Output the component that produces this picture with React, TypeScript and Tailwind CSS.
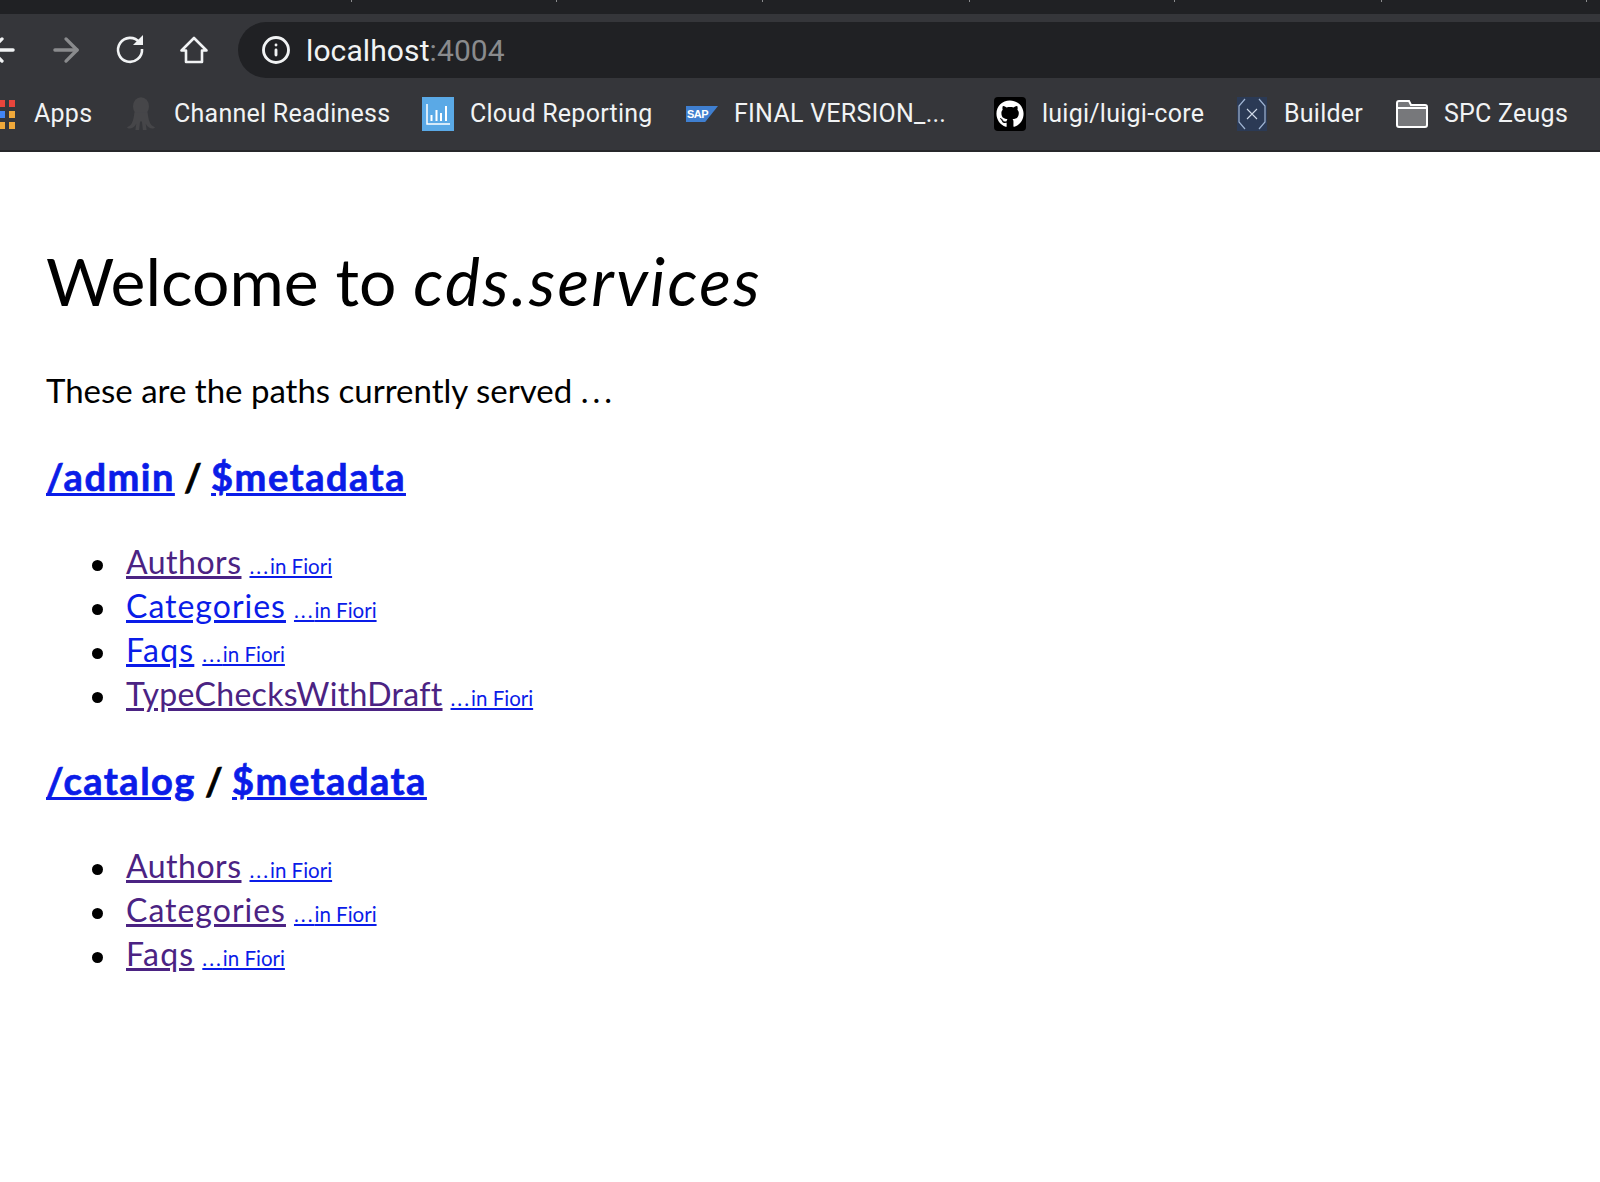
import React from "react";
import { ArrowLeft, ArrowRight, Info } from "lucide-react";
import { FaGithub } from "react-icons/fa";

function Apps() {
  const c = ["bg-[#e8453c]", "bg-[#e8453c]", "bg-[#4285f4]", "bg-[#f0a93a]", "bg-[#f0a93a]", "bg-[#f0a93a]"];
  return (
    <div className="grid grid-cols-2 gap-[4px] w-[16px] ml-[-1px] mr-[19px]">
      {c.map((x, i) => (
        <span key={i} className={`h-[7px] w-[6px] ${x}`} />
      ))}
    </div>
  );
}

function Octopus() {
  return (
    <svg viewBox="0 0 32 36" className="w-[30px] h-[36px]" fill="#464649">
      <ellipse cx="16" cy="10" rx="8.5" ry="10" />
      <path d="M9 16 C8 24 7 30 1 32 C3 35 9 33 11 28 L10 35 L14 35 L15 26 L17 26 L18 35 L22 35 L21 28 C23 33 29 35 31 32 C25 30 24 24 23 16 Z" />
    </svg>
  );
}

function Chart() {
  return (
    <svg viewBox="0 0 32 34" className="w-[32px] h-[34px]">
      <rect width="32" height="34" fill="#5aa9e6" />
      <path d="M5 7V27H28" stroke="#fff" strokeWidth="1.5" fill="none" />
      <path d="M9.5 18V24M14.5 13V24M19 16V24M24 9V24" stroke="#fff" strokeWidth="2" />
    </svg>
  );
}

function Sap() {
  return (
    <div
      className="w-[32px] h-[16px] bg-[#3f7fd0] flex items-center pl-[1px] text-[11px] leading-none font-bold text-white tracking-tighter"
      style={{ clipPath: "polygon(0 0, 100% 0, 60% 100%, 0 100%)", fontFamily: "'Liberation Sans', sans-serif" }}
    >
      SAP
    </div>
  );
}

function Github() {
  return (
    <div className="w-[32px] h-[34px] bg-black rounded-[4px] flex items-center justify-center text-white">
      <FaGithub size={28} />
    </div>
  );
}

function Hex() {
  return (
    <svg viewBox="0 0 32 34" className="w-[32px] h-[34px]">
      <rect x="1" width="30" height="34" fill="#2b3a55" />
      <path d="M9 2L3 9V25L9 32M23 2L29 9V25L23 32" stroke="#9fb4d2" strokeWidth="1.2" fill="none" />
      <path d="M11 12L21 22M21 12L11 22" stroke="#d0dae8" strokeWidth="1.1" />
    </svg>
  );
}

function Folder() {
  return (
    <svg viewBox="0 0 32 28" className="w-[32px] h-[28px]">
      <path d="M1 3a2 2 0 0 1 2-2h10l2 4h14a2 2 0 0 1 2 2v18a2 2 0 0 1-2 2H3a2 2 0 0 1-2-2Z" fill="#77787b" stroke="#fff" strokeWidth="2" />
      <path d="M1 8H31" stroke="#fff" strokeWidth="2" />
    </svg>
  );
}

function Reload() {
  return (
    <svg viewBox="0 2 30 30" className="w-[30px] h-[30px] ml-[30px]">
      <path d="M24.5 9.5A12 12 0 1 0 27 16" fill="none" stroke="#f1f3f4" strokeWidth="2.6" />
      <path d="M28 2V12H18Z" fill="#f1f3f4" />
    </svg>
  );
}

function HomeIcon() {
  return (
    <svg viewBox="0 0 32 32" className="w-[32px] h-[32px] ml-[33px]">
      <path d="M16 4L3.5 16.5H8V28H24V16.5H28.5Z" fill="none" stroke="#f1f3f4" strokeWidth="2.6" strokeLinejoin="round" />
    </svg>
  );
}

function Bookmark({ icon, label, w, ml }: { icon: React.ReactNode; label: string; w: string; ml: string }) {
  return (
    <div className={`flex items-center ${ml}`}>
      {icon}
      <span className={`${w} whitespace-nowrap`}>{label}</span>
    </div>
  );
}

const spacing: Record<string, string> = {
  Authors: "tracking-[0.5px]",
  Categories: "tracking-[1px]",
  Faqs: "tracking-[1.2px]",
  TypeChecksWithDraft: "tracking-[0.3px]",
};

function Entity({ name, visited }: { name: string; visited?: boolean }) {
  return (
    <li className="h-[44px] flex items-center">
      <span className="w-[11px] h-[11px] rounded-full bg-black mr-[23px] shrink-0" />
      <div className="leading-[44px] whitespace-nowrap">
        <a href="#" className={`underline text-[32px] ${spacing[name]} ${visited ? "text-[#4b2383]" : "text-[#0a1ce8]"}`}>
          {name}
        </a>
        <a href="#" className="underline text-[20.5px] ml-[8px] text-[#0a1ce8]">
          <span className="tracking-[2px]">...</span>in Fiori
        </a>
      </div>
    </li>
  );
}

function Service({ path, items }: { path: string; items: [string, boolean][] }) {
  return (
    <section>
      <h3 className="text-[38px] font-bold leading-[44px] text-black [-webkit-text-stroke:0.7px]">
        <a href="#" className="underline tracking-[1.5px] text-[#0a1ce8]">{path}</a>
        {" / "}
        <a href="#" className="underline tracking-[1.5px] text-[#0a1ce8]">$metadata</a>
      </h3>
      <ul className="list-none pl-[46px] pt-[45px] pb-[39px]">
        {items.map(([n, v]) => (
          <Entity key={n} name={n} visited={v} />
        ))}
      </ul>
    </section>
  );
}

export default function App() {
  const ticks = [351, 556, 762, 969, 1174, 1381, 1586];
  return (
    <div className="min-h-[1182px] bg-white overflow-hidden">
      <header className="bg-[#35363a] border-b-2 border-[#26272a] h-[152px]" style={{ fontFamily: "Roboto, sans-serif" }}>
        <div className="h-[14px] bg-[#202124] relative">
          {ticks.map((t) => (
            <span key={t} className="absolute top-0 w-[1px] h-[2px] bg-[#8a8b8d]" style={{ left: t }} />
          ))}
        </div>
        <div className="h-[72px] flex items-center">
          <ArrowLeft size={38} strokeWidth={2.1} className="ml-[-17px] text-[#f1f3f4]" />
          <ArrowRight size={38} strokeWidth={2.1} className="ml-[26px] text-[#8a8b8d]" />
          <Reload />
          <HomeIcon />
          <div className="ml-[28px] flex-1 h-[56px] rounded-l-[28px] bg-[#202124] flex items-center pl-[23px] text-[30px] tracking-[0.1px] text-[#f1f3f4]">
            <Info size={30} strokeWidth={2.3} />
            <span className="ml-[15px]">localhost<span className="text-[#8a8b8d]">:4004</span></span>
          </div>
        </div>
        <div className="h-[56px] flex items-center text-[25px] tracking-[0.25px] text-[#f1f3f4]">
          <Bookmark icon={<Apps />} label="Apps" w="w-[60px]" ml="" />
          <Bookmark icon={<div className="mr-[18px]"><Octopus /></div>} label="Channel Readiness" w="w-[216px]" ml="ml-[32px]" />
          <Bookmark icon={<div className="mr-[16px]"><Chart /></div>} label="Cloud Reporting" w="w-[184px]" ml="ml-[32px]" />
          <Bookmark icon={<div className="mr-[16px]"><Sap /></div>} label="FINAL VERSION_..." w="w-[212px]" ml="ml-[32px]" />
          <Bookmark icon={<div className="mr-[16px]"><Github /></div>} label="luigi/luigi-core" w="w-[162px]" ml="ml-[48px]" />
          <Bookmark icon={<div className="mr-[16px]"><Hex /></div>} label="Builder" w="w-[80px]" ml="ml-[32px]" />
          <Bookmark icon={<div className="mr-[16px]"><Folder /></div>} label="SPC Zeugs" w="w-[124px]" ml="ml-[32px]" />
        </div>
      </header>
      <main className="pl-[46px] pt-[93px] text-black" style={{ fontFamily: "Lato, sans-serif" }}>
        <h1 className="text-[66px] leading-[72px] font-normal">
          Welcome to <em className="tracking-[2.3px]">cds.services</em>
        </h1>
        <p className="text-[33px] leading-[40px] mt-[53px] mb-[44px]">
          These are the paths currently served <span className="tracking-[4px]">...</span>
        </p>
        <Service
          path="/admin"
          items={[["Authors", true], ["Categories", false], ["Faqs", false], ["TypeChecksWithDraft", true]]}
        />
        <Service path="/catalog" items={[["Authors", true], ["Categories", true], ["Faqs", true]]} />
      </main>
    </div>
  );
}
